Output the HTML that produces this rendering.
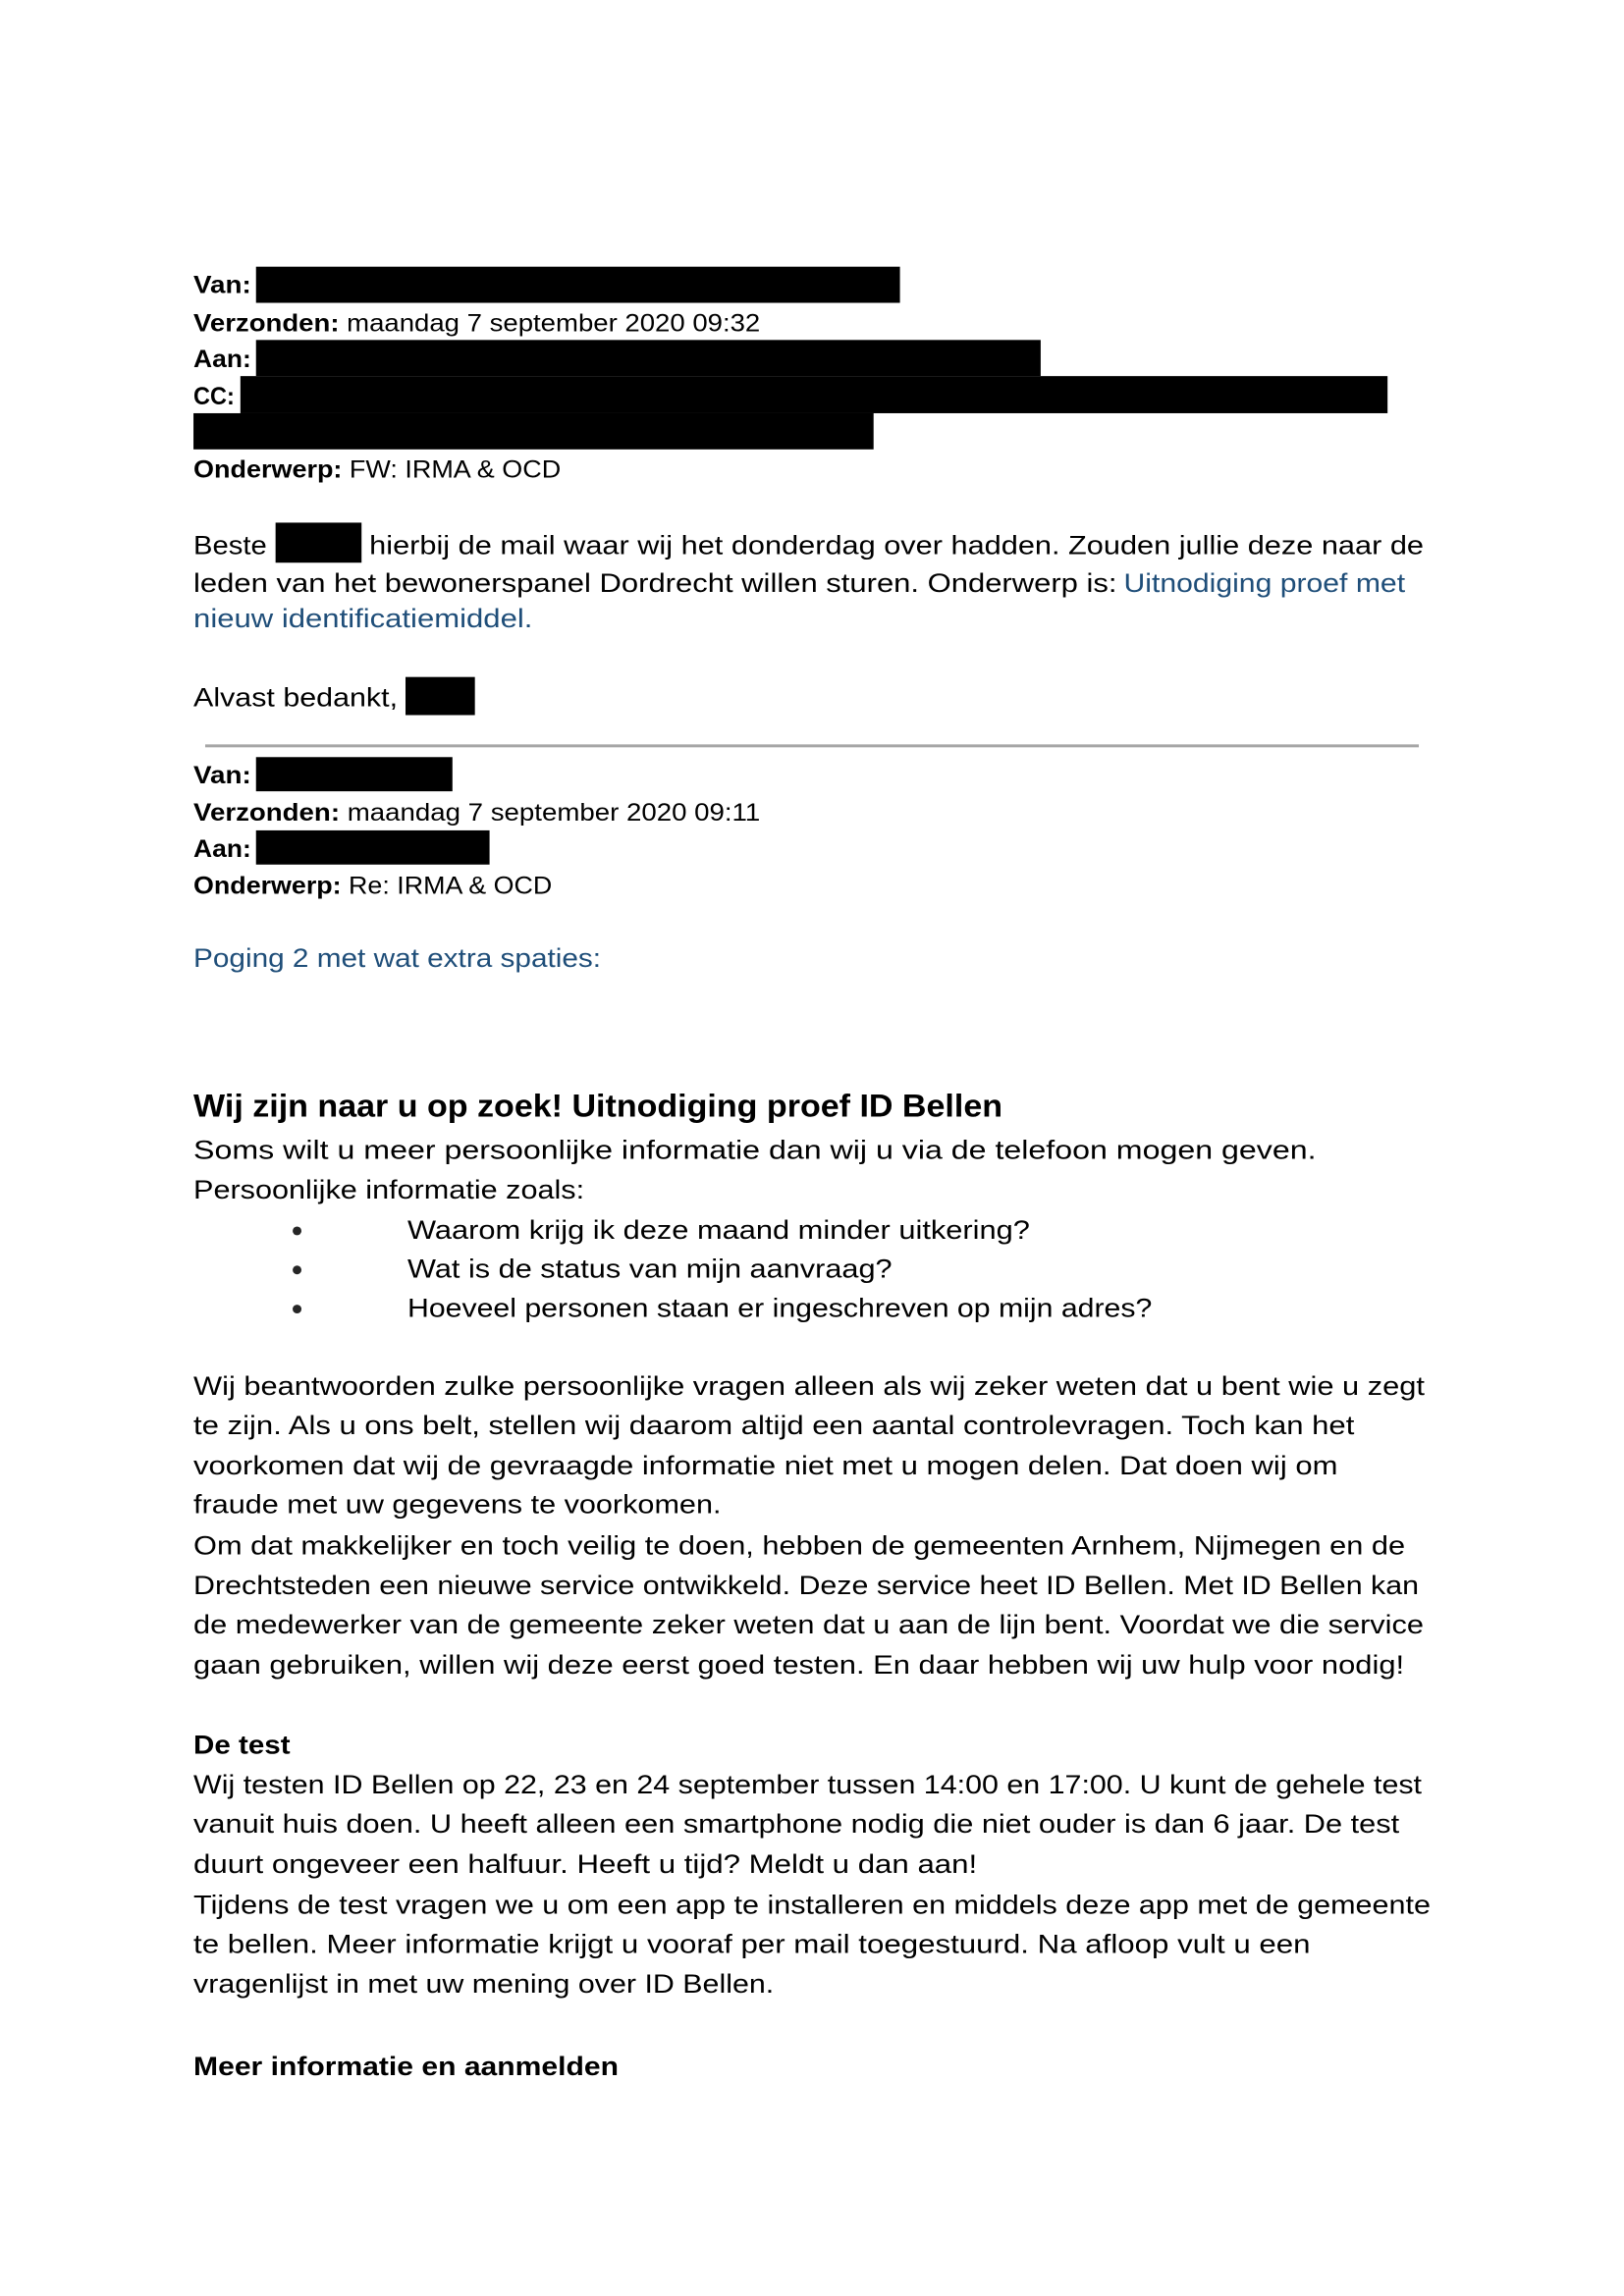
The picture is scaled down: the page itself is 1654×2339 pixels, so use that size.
<!DOCTYPE html>
<html><head><meta charset="utf-8"><style>
html,body{margin:0;padding:0;background:#fff;}
svg{display:block;}
text{font-family:"Liberation Sans",sans-serif;fill:#000;}
.h{font-size:25px;}
.b{font-size:27px;}
.bl{fill:#1f4e79;}
</style></head><body>
<svg width="1654" height="2339" viewBox="0 0 1654 2339" xmlns="http://www.w3.org/2000/svg">
<g transform="scale(0.9952)">
<g fill="#000">
<rect x="262" y="273" width="659" height="37"/>
<rect x="262" y="348" width="803" height="37"/>
<rect x="246" y="385" width="1174" height="38"/>
<rect x="198" y="423" width="696" height="37"/>
<rect x="282" y="535" width="88" height="41"/>
<rect x="415" y="693" width="71" height="39"/>
<rect x="262" y="775" width="201" height="35"/>
<rect x="262" y="850" width="239" height="35"/>
</g>
<rect x="210" y="762" width="1242" height="3" fill="#a6a6a6"/>
<text class="h" x="198" y="300" font-weight="bold" textLength="59" lengthAdjust="spacingAndGlyphs">Van:</text>
<text class="h" x="198" y="339" textLength="580" lengthAdjust="spacingAndGlyphs"><tspan font-weight="bold">Verzonden:</tspan> maandag 7 september 2020 09:32</text>
<text class="h" x="198" y="376" font-weight="bold" textLength="59" lengthAdjust="spacingAndGlyphs">Aan:</text>
<text class="h" x="198" y="414" font-weight="bold" textLength="42" lengthAdjust="spacingAndGlyphs">CC:</text>
<text class="h" x="198" y="489" textLength="376" lengthAdjust="spacingAndGlyphs"><tspan font-weight="bold">Onderwerp:</tspan> FW: IRMA &amp; OCD</text>
<text class="b" x="198" y="567" textLength="75" lengthAdjust="spacingAndGlyphs">Beste</text>
<text class="b" x="378" y="567" textLength="1079" lengthAdjust="spacingAndGlyphs">hierbij de mail waar wij het donderdag over hadden. Zouden jullie deze naar de</text>
<text class="b" x="198" y="606" textLength="945" lengthAdjust="spacingAndGlyphs">leden van het bewonerspanel Dordrecht willen sturen. Onderwerp is:</text>
<text class="b bl" x="1150" y="606" textLength="288" lengthAdjust="spacingAndGlyphs">Uitnodiging proef met</text>
<text class="b bl" x="198" y="642" textLength="347" lengthAdjust="spacingAndGlyphs">nieuw identificatiemiddel.</text>
<text class="b" x="198" y="723" textLength="209" lengthAdjust="spacingAndGlyphs">Alvast bedankt,</text>
<text class="h" x="198" y="802" font-weight="bold" textLength="59" lengthAdjust="spacingAndGlyphs">Van:</text>
<text class="h" x="198" y="840" textLength="580" lengthAdjust="spacingAndGlyphs"><tspan font-weight="bold">Verzonden:</tspan> maandag 7 september 2020 09:11</text>
<text class="h" x="198" y="877" font-weight="bold" textLength="59" lengthAdjust="spacingAndGlyphs">Aan:</text>
<text class="h" x="198" y="915" textLength="367" lengthAdjust="spacingAndGlyphs"><tspan font-weight="bold">Onderwerp:</tspan> Re: IRMA &amp; OCD</text>
<text class="b bl" x="198" y="990" textLength="417" lengthAdjust="spacingAndGlyphs">Poging 2 met wat extra spaties:</text>
<text x="198" y="1143" font-size="33" font-weight="bold" fill="#262626" textLength="828" lengthAdjust="spacingAndGlyphs">Wij zijn naar u op zoek! Uitnodiging proef ID Bellen</text>
<g fill="#262626">
<text class="b" x="198" y="1186" fill="#262626" textLength="1149" lengthAdjust="spacingAndGlyphs">Soms wilt u  meer  persoonlijke  informatie dan wij u  via  de  telefoon mogen geven.</text>
<text class="b" x="198" y="1227" fill="#262626" textLength="400" lengthAdjust="spacingAndGlyphs">Persoonlijke informatie zoals:</text>
<circle cx="304" cy="1260" r="4.5"/><circle cx="304" cy="1300" r="4.5"/><circle cx="304" cy="1340" r="4.5"/>
</g>
<text class="b" x="417" y="1268" fill="#262626" textLength="637" lengthAdjust="spacingAndGlyphs">Waarom krijg ik deze maand minder uitkering?</text>
<text class="b" x="417" y="1308" fill="#262626" textLength="496" lengthAdjust="spacingAndGlyphs">Wat is de status  van mijn aanvraag?</text>
<text class="b" x="417" y="1348" fill="#262626" textLength="762" lengthAdjust="spacingAndGlyphs">Hoeveel personen staan er ingeschreven op mijn adres?</text>
<text class="b" x="198" y="1428" fill="#262626" textLength="1260" lengthAdjust="spacingAndGlyphs">Wij beantwoorden zulke persoonlijke vragen alleen als wij zeker weten dat u bent wie u zegt</text>
<text class="b" x="198" y="1468" fill="#262626" textLength="1188" lengthAdjust="spacingAndGlyphs">te zijn. Als u ons belt, stellen wij daarom altijd een aantal  controlevragen. Toch kan het</text>
<text class="b" x="198" y="1509" fill="#262626" textLength="1171" lengthAdjust="spacingAndGlyphs">voorkomen dat wij de gevraagde informatie niet met u mogen delen. Dat doen wij om</text>
<text class="b" x="198" y="1549" fill="#262626" textLength="540" lengthAdjust="spacingAndGlyphs">fraude met uw gegevens te voorkomen.</text>
<text class="b" x="198" y="1591" fill="#262626" textLength="1240" lengthAdjust="spacingAndGlyphs">Om dat makkelijker en toch veilig te doen, hebben de gemeenten Arnhem, Nijmegen en de</text>
<text class="b" x="198" y="1632" fill="#262626" textLength="1254" lengthAdjust="spacingAndGlyphs">Drechtsteden een nieuwe service ontwikkeld. Deze service heet ID Bellen. Met ID Bellen kan</text>
<text class="b" x="198" y="1672" fill="#262626" textLength="1259" lengthAdjust="spacingAndGlyphs">de medewerker van de gemeente zeker weten dat u aan de lijn bent. Voordat we die service</text>
<text class="b" x="198" y="1713" fill="#262626" textLength="1239" lengthAdjust="spacingAndGlyphs">gaan gebruiken, willen wij deze eerst goed testen.  En daar hebben wij uw hulp voor nodig!</text>
<text class="b" x="198" y="1795" font-weight="bold" fill="#262626" textLength="99" lengthAdjust="spacingAndGlyphs">De test</text>
<text class="b" x="198" y="1836" fill="#262626" textLength="1257" lengthAdjust="spacingAndGlyphs">Wij testen ID Bellen op 22, 23 en 24 september tussen 14:00 en 17:00. U kunt de gehele test</text>
<text class="b" x="198" y="1876" fill="#262626" textLength="1234" lengthAdjust="spacingAndGlyphs">vanuit huis doen. U heeft alleen een smartphone nodig die niet ouder is dan 6 jaar. De test</text>
<text class="b" x="198" y="1917" fill="#262626" textLength="802" lengthAdjust="spacingAndGlyphs">duurt ongeveer een halfuur. Heeft u tijd? Meldt u dan aan!</text>
<text class="b" x="198" y="1959" fill="#262626" textLength="1266" lengthAdjust="spacingAndGlyphs">Tijdens de test vragen we u om een app te installeren en middels deze app met de gemeente</text>
<text class="b" x="198" y="1999" fill="#262626" textLength="1143" lengthAdjust="spacingAndGlyphs">te bellen. Meer informatie krijgt u vooraf per mail toegestuurd. Na afloop vult u een</text>
<text class="b" x="198" y="2040" fill="#262626" textLength="594" lengthAdjust="spacingAndGlyphs">vragenlijst in met uw mening over ID Bellen.</text>
<text class="b" x="198" y="2124" font-weight="bold" fill="#262626" textLength="435" lengthAdjust="spacingAndGlyphs">Meer informatie en aanmelden</text>
</g>
</svg>
</body></html>
